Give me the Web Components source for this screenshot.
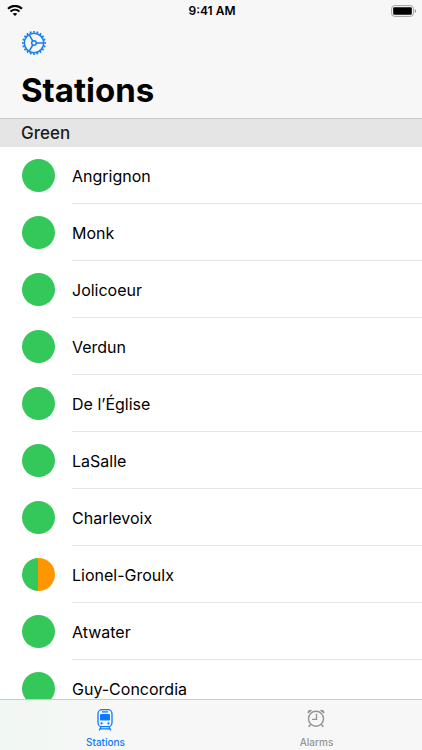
<!DOCTYPE html>
<html lang="en">
<head>
<meta charset="utf-8">
<meta name="viewport" content="width=device-width, initial-scale=1">
<title>Stations</title>
<style>
html, body { margin: 0; height: 100%; }
body { font-family: Inter, "Liberation Sans", sans-serif; color: #000; background: #fff; }
</style>
</head>
<body>
<metro-app></metro-app>
<script>
function define(name, html, setup) {
  const template = document.createElement('template');
  template.innerHTML = html;
  customElements.define(name, class extends HTMLElement {
    constructor() {
      super();
      this.attachShadow({ mode: 'open' }).append(template.content.cloneNode(true));
    }
    connectedCallback() { if (setup) setup(this, this.shadowRoot); }
  });
}

define('status-bar', `
<style>
:host { display: grid; grid-template-columns: 1fr auto 1fr; align-items: center; height: 22px; padding: 0 5px 0 7px; font-size: 12px; font-weight: 600; line-height: 16px; }
svg { display: block; }
.battery { justify-self: end; }
</style>
<svg width="16" height="12" viewBox="0 0 16 12" role="img" aria-label="Wi-Fi">
  <g fill="none" stroke="#000" stroke-width="2.1">
    <path d="M1 3.7C5 -.1 11 -.1 15 3.7"/><path d="M3.5 6.6C6.1 4.2 9.9 4.2 12.5 6.6"/>
  </g>
  <path d="M8 11L5.7 8.7C7 7.6 9 7.6 10.3 8.7Z"/>
</svg>
<span>9:41 AM</span>
<svg class="battery" width="26" height="12" viewBox="0 0 26 12" role="img" aria-label="Battery full">
  <rect x=".6" y=".6" width="21.8" height="10.8" rx="3" fill="none" stroke="#a0a0a0"/>
  <rect x="2.2" y="2.2" width="18.6" height="7.6" rx="1"/>
  <path d="M23.8 4C25.4 4.5 25.4 7.5 23.8 8Z" fill="#888"/>
</svg>`);

define('nav-header', `
<style>
:host { display: block; background: #f7f7f7; border-bottom: 1px solid #c6c6c8; }
.tools { display: flex; align-items: center; height: 42px; padding: 0 22px; }
button { display: block; padding: 0; border: 0; background: none; color: #177ef0; }
svg { display: block; }
h1 { margin: 0; padding: 5px 21px 7px; font-size: 33px; line-height: 42px; font-weight: 700; }
</style>
<status-bar></status-bar>
<div class="tools">
  <button type="button" aria-label="Settings">
    <svg width="24" height="24" viewBox="0 0 24 24" fill="none" stroke="currentColor" stroke-width="1.5">
      <circle cx="12" cy="12" r="9.7"/>
      <circle cx="12" cy="12" r="11.1" stroke-width="1.7" pathLength="40" stroke-dasharray="1 1" stroke-dashoffset=".5"/>
      <circle cx="12" cy="12" r="2.3"/>
      <path d="M14.3 12H21.5M10.8 10L7.2 3.8M10.8 14L7.2 20.2"/>
    </svg>
  </button>
</div>
<h1><slot></slot></h1>`);

define('section-header', `
<style>
:host { display: block; background: #e5e5e5; }
h2 { margin: 0; padding: 0 21px; font-size: 17px; line-height: 28px; font-weight: 500; color: #1c1c1c; }
</style>
<h2><slot></slot></h2>`);

define('line-dot', `
<style>
:host { display: block; flex: none; width: 33px; height: 33px; border-radius: 50%; background: linear-gradient(90deg, #34c759 50%, var(--second, #34c759) 50%); }
</style>`);

define('station-row', `
<style>
:host { display: flex; align-items: center; height: 57px; padding-left: 22px; gap: 17px; }
.name { flex: 1; align-self: stretch; display: flex; align-items: center; box-sizing: border-box; padding-top: 2px; border-bottom: 1px solid #e6e6e8; font-size: 16px; line-height: 22px; }
</style>
<line-dot></line-dot>
<div class="name"><slot></slot></div>`);

define('tab-item', `
<style>
:host { display: block; flex: 1; }
button { display: flex; flex-direction: column; align-items: center; gap: 3px; width: 100%; height: 50px; padding: 9px 0 0; border: 0; background: none; color: #959595; font: 500 10px/16px Inter, "Liberation Sans", sans-serif; }
:host([selected]) button { color: #0a7aff; }
::slotted(svg) { display: block; }
</style>
<button type="button" role="tab"><slot name="icon"></slot><slot></slot></button>`,
(host, root) => root.querySelector('button').setAttribute('aria-selected', host.hasAttribute('selected')));

define('tab-bar', `
<style>
:host { display: flex; background: linear-gradient(90deg, #f1f7f3, #f7f7f7 30%); border-top: 1px solid #cbcbcd; }
</style>
<slot></slot>`);

define('metro-app', `
<style>
:host { display: flex; flex-direction: column; height: 100vh; }
main { flex: 1; min-height: 0; overflow: hidden; }
</style>
<nav-header>Stations</nav-header>
<main>
  <section-header>Green</section-header>
  <div id="list" role="list"></div>
</main>
<tab-bar role="tablist">
  <tab-item selected>
    <svg slot="icon" width="23" height="22" viewBox="0 0 23 22" fill="none" stroke="currentColor">
      <rect x="4" y=".7" width="14" height="17" rx="4" stroke-width="1.3"/>
      <path d="M8 2.9H14" stroke-width="1.3"/>
      <path d="M7.2 5H14.8Q16 5 16 6.2V10.3Q16 11.5 14.8 11.5H7.2Q6 11.5 6 10.3V6.2Q6 5 7.2 5Z" fill="currentColor" stroke="none"/>
      <circle cx="7.6" cy="14.4" r="1.1" fill="currentColor" stroke="none"/>
      <circle cx="14.4" cy="14.4" r="1.1" fill="currentColor" stroke="none"/>
      <path d="M7 18L5.2 21.4M15 18L16.8 21.4M6.3 19.8H15.7" stroke-width="1.3"/>
    </svg>Stations
  </tab-item>
  <tab-item>
    <svg slot="icon" width="23" height="22" viewBox="0 0 23 22" fill="none" stroke="currentColor" stroke-width="1.4">
      <circle cx="11" cy="9.8" r="7.5"/>
      <path d="M11.5 4.8V10.4H7"/>
      <path d="M5.6 15.4L3.6 17.8M16.4 15.4L18.4 17.8" stroke-width="1.6"/>
      <path d="M3 4.7C1.6 2.2 4.4 -.4 7.2 1.4ZM19 4.7C20.4 2.2 17.6 -.4 14.8 1.4Z" fill="currentColor" stroke="none"/>
    </svg>Alarms
  </tab-item>
</tab-bar>`, (host, root) => {
  const stations = ['Angrignon', 'Monk', 'Jolicoeur', 'Verdun', 'De l’Église', 'LaSalle', 'Charlevoix', 'Lionel-Groulx', 'Atwater', 'Guy-Concordia'];
  root.getElementById('list').append(...stations.map(name => {
    const row = document.createElement('station-row');
    row.setAttribute('role', 'listitem');
    row.textContent = name;
    if (name === 'Lionel-Groulx') row.style.setProperty('--second', '#ff9500');
    return row;
  }));
});
</script>
</body>
</html>
